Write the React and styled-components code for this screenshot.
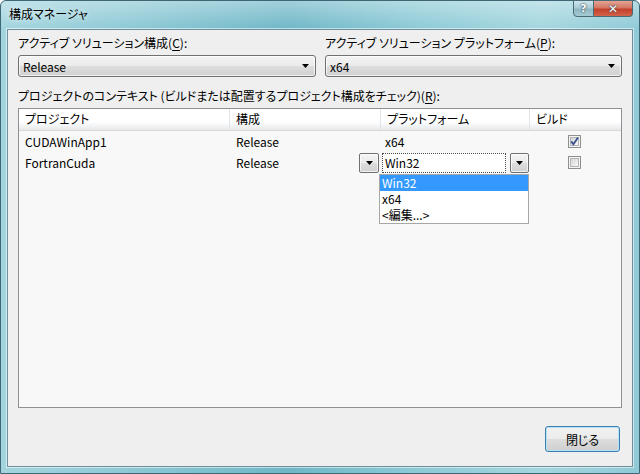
import React from "react";
import styled, { createGlobalStyle } from "styled-components";

const GlobalStyle = createGlobalStyle`
  html, body {
    margin: 0;
    padding: 0;
    background: #ffffff;
  }
  body {
    font-family: "Noto Sans CJK JP", "Noto Sans", sans-serif;
    font-size: 12px;
    color: #000;
  }
`;

const Window = styled.div`
  width: 640px;
  height: 474px;
  box-sizing: border-box;
  display: flex;
  flex-direction: column;
  padding: 0 6px 6px 6px;
  border: 1px solid #3f6674;
  border-radius: 6px 6px 0 0;
  background:
    linear-gradient(180deg, rgba(255, 255, 255, 0.35), rgba(255, 255, 255, 0) 28px),
    linear-gradient(90deg, #a3d5df 0%, #8dc9d5 20%, #6fb7c7 45%, #8ccad6 65%, #a4d6df 85%, #8fcad6 100%);
`;

const TitleBar = styled.div`
  height: 28px;
  display: flex;
  align-items: flex-start;
  justify-content: space-between;
`;

const Title = styled.div`
  padding: 5px 0 0 2px;
  line-height: 16px;
  font-feature-settings: "palt";
  text-shadow: 0 0 6px rgba(255, 255, 255, 0.9);
`;

const CaptionButtons = styled.div`
  display: flex;
  margin-top: -1px;
`;

const CaptionButton = styled.div`
  width: ${(p) => (p.$close ? "39px" : "21px")};
  height: 17px;
  box-sizing: border-box;
  display: flex;
  align-items: center;
  justify-content: center;
  border: 1px solid #4a6a76;
  border-left: ${(p) => (p.$close ? "none" : "1px solid #4a6a76")};
  border-radius: ${(p) => (p.$close ? "0 0 4px 0" : "0 0 0 4px")};
  background: ${(p) =>
    p.$close
      ? "linear-gradient(180deg, #e6a394 0%, #d37764 45%, #c4402a 55%, #d2634a 100%)"
      : "linear-gradient(180deg, #cfe6ec 0%, #a9ccd6 45%, #8fb7c3 55%, #a6cbd4 100%)"};
  color: #fff;
  font-family: "DejaVu Sans", sans-serif;
  font-weight: bold;
  font-size: ${(p) => (p.$close ? "12px" : "11px")};
  text-shadow: 0 0 2px #30404a, 0 0 1px #30404a;
`;

const Client = styled.div`
  flex: 1;
  display: flex;
  flex-direction: column;
  padding: 5px 10px 14px 10px;
  border: 1px solid #6f8f9c;
  box-shadow: 0 0 0 1px rgba(255, 255, 255, 0.55);
  background: #efefef;
  min-height: 0;
`;

const ComboGrid = styled.div`
  display: grid;
  grid-template-columns: 298px 297px;
  column-gap: 9px;
`;

const Field = styled.div`
  display: flex;
  flex-direction: column;
  gap: 4px;
`;

const Label = styled.div`
  line-height: 16px;
  font-feature-settings: "palt";
  margin-top: ${(p) => p.$gap || 0}px;
  u {
    text-decoration-thickness: 1px;
    text-underline-offset: 2px;
  }
`;

const ComboBox = styled.div`
  height: 22px;
  box-sizing: border-box;
  display: flex;
  align-items: center;
  justify-content: space-between;
  padding: 0 6px 0 4px;
  border: 1px solid #707070;
  border-radius: 3px;
  box-shadow: inset 0 0 0 1px rgba(255, 255, 255, 0.7);
  background: linear-gradient(180deg, #f4f4f4 0%, #ebebeb 48%, #dddddd 52%, #d0d0d0 100%);
`;

const Arrow = () => (
  <svg width="7" height="4" viewBox="0 0 7 4">
    <path d="M0 0h7L3.5 4z" fill="#000" />
  </svg>
);

const ListView = styled.div`
  flex: 1;
  margin-top: 4px;
  display: flex;
  flex-direction: column;
  border: 1px solid #8e9094;
  background: #f8f8f8;
`;

const Columns = styled.div`
  display: grid;
  grid-template-columns: 210px 151px 149px 1fr;
`;

const HeaderRow = styled(Columns)`
  height: 22px;
  box-sizing: border-box;
  border-bottom: 1px solid #d8d9db;
  background: linear-gradient(180deg, #ffffff 0%, #ffffff 60%, #f3f4f6 80%, #e7e8ea 100%);
`;

const HeaderCell = styled.div`
  padding-left: 6px;
  line-height: 20px;
  font-feature-settings: "palt";
  border-left: ${(p) => (p.$first ? "none" : "1px solid #e2e3e5")};
`;

const Row = styled(Columns)`
  height: 21px;
`;

const Cell = styled.div`
  position: relative;
  display: flex;
  align-items: ${(p) => (p.$top ? "flex-start" : "center")};
  justify-content: ${(p) => p.$justify || "flex-start"};
  padding: ${(p) => p.$pad || "0 0 0 6px"};
  gap: ${(p) => p.$gap || 0}px;
`;

const CellText = styled.span`
  line-height: 20px;
`;

const DropButton = styled.div`
  width: ${(p) => p.$w || 20}px;
  height: 20px;
  box-sizing: border-box;
  display: flex;
  align-items: center;
  justify-content: center;
  border: 1px solid #707070;
  border-radius: 2px;
  box-shadow: inset 0 0 0 1px rgba(255, 255, 255, 0.7);
  background: linear-gradient(180deg, #f4f4f4 0%, #ebebeb 48%, #dddddd 52%, #d0d0d0 100%);
`;

const EditBox = styled.div`
  width: 124px;
  height: 20px;
  box-sizing: border-box;
  padding-left: 2px;
  line-height: 18px;
  border: 1px dotted #4a4a4a;
  background: #ffffff;
`;

const DropList = styled.div`
  position: absolute;
  top: 22px;
  left: -1px;
  width: 150px;
  box-sizing: border-box;
  border: 1px solid #a7a7a7;
  background: #ffffff;
  z-index: 2;
`;

const DropItem = styled.div`
  height: 16px;
  line-height: 16px;
  padding-left: 2px;
  background: ${(p) => (p.$selected ? "#3399ff" : "transparent")};
  color: ${(p) => (p.$selected ? "#ffffff" : "#000")};
`;

const Footer = styled.div`
  margin-top: 18px;
  display: flex;
  justify-content: flex-end;
  padding-right: 2px;
`;

const PushButton = styled.div`
  width: 75px;
  height: 26px;
  box-sizing: border-box;
  display: flex;
  align-items: center;
  justify-content: center;
  border: 1px solid #3c7fb1;
  border-radius: 3px;
  box-shadow: inset 0 0 0 1px #b6e2f7;
  background: linear-gradient(180deg, #f2f2f2 0%, #ebebeb 48%, #dddddd 52%, #cfcfcf 100%);
  font-feature-settings: "palt";
`;

const Check = ({ checked }) => (
  <svg width="13" height="13" viewBox="0 0 13 13">
    <defs>
      <linearGradient id="cbg" x1="0" y1="0" x2="1" y2="1">
        <stop offset="0" stopColor="#d6d6d6" />
        <stop offset="1" stopColor="#f8f8f8" />
      </linearGradient>
    </defs>
    <rect x="0.5" y="0.5" width="12" height="12" fill="#f4f4f4" stroke="#8e8f8f" />
    <rect x="2.5" y="2.5" width="8" height="8" fill="url(#cbg)" stroke="#b5b5b5" />
    {checked && (
      <path d="M3.2 6.4 L5.4 9.2 L10 2.6" fill="none" stroke="#3a4f8f" strokeWidth="1.8" />
    )}
  </svg>
);

export default function App() {
  return (
    <>
      <GlobalStyle />
      <Window>
        <TitleBar>
          <Title>構成マネージャ</Title>
          <CaptionButtons>
            <CaptionButton>?</CaptionButton>
            <CaptionButton $close>✕</CaptionButton>
          </CaptionButtons>
        </TitleBar>
        <Client>
          <ComboGrid>
            <Field>
              <Label>
                アクティブ ソリューション構成(<u>C</u>):
              </Label>
              <ComboBox>
                <span>Release</span>
                <Arrow />
              </ComboBox>
            </Field>
            <Field>
              <Label>
                アクティブ ソリューション プラットフォーム(<u>P</u>):
              </Label>
              <ComboBox>
                <span>x64</span>
                <Arrow />
              </ComboBox>
            </Field>
          </ComboGrid>
          <Label $gap={11}>
            プロジェクトのコンテキスト (ビルドまたは配置するプロジェクト構成をチェック)(<u>R</u>):
          </Label>
          <ListView>
            <HeaderRow>
              <HeaderCell $first>プロジェクト</HeaderCell>
              <HeaderCell>構成</HeaderCell>
              <HeaderCell>プラットフォーム</HeaderCell>
              <HeaderCell>ビルド</HeaderCell>
            </HeaderRow>
            <Row>
              <Cell>
                <CellText>CUDAWinApp1</CellText>
              </Cell>
              <Cell $pad="0 0 0 7px">
                <CellText>Release</CellText>
              </Cell>
              <Cell $pad="0 0 0 5px">
                <CellText>x64</CellText>
              </Cell>
              <Cell $justify="center" $pad="0 2px 0 0">
                <Check checked />
              </Cell>
            </Row>
            <Row>
              <Cell>
                <CellText>FortranCuda</CellText>
              </Cell>
              <Cell $justify="space-between" $pad="1px 1px 0 7px" $top>
                <CellText>Release</CellText>
                <DropButton>
                  <Arrow />
                </DropButton>
              </Cell>
              <Cell $pad="1px 0 0 2px" $gap={4} $top>
                <EditBox>Win32</EditBox>
                <DropButton $w={19}>
                  <Arrow />
                </DropButton>
                <DropList>
                  <DropItem $selected>Win32</DropItem>
                  <DropItem>x64</DropItem>
                  <DropItem>&lt;編集...&gt;</DropItem>
                </DropList>
              </Cell>
              <Cell $justify="center" $pad="0 2px 0 0">
                <Check />
              </Cell>
            </Row>
          </ListView>
          <Footer>
            <PushButton>閉じる</PushButton>
          </Footer>
        </Client>
      </Window>
    </>
  );
}
